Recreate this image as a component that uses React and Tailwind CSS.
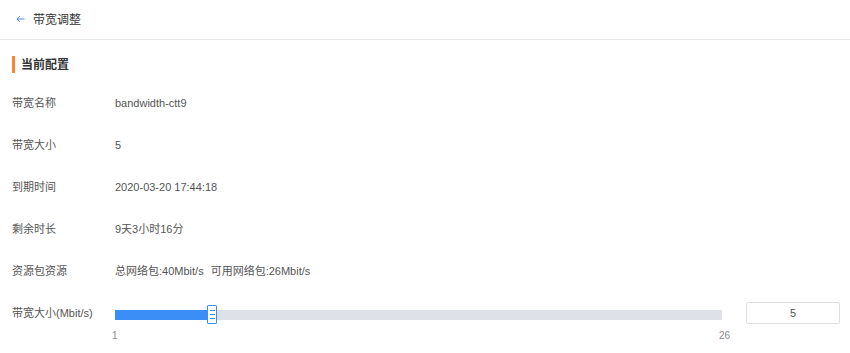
import React from "react";

function Row({ label, children }) {
  return (
    <div className="flex h-[42px] items-center">
      <div className="w-[103px] shrink-0 text-[11px] text-[#555]">{label}</div>
      <div className="text-[11px] text-[#555]">{children}</div>
    </div>
  );
}

export default function App() {
  return (
    <div className="w-[850px] h-[353px] bg-white font-['Liberation_Sans','Noto_Sans_CJK_SC',sans-serif]">
      <div className="flex h-[40px] items-center border-b border-[#e6e8eb] pl-[16px]">
        <svg width="9" height="8" viewBox="0 0 9 8" className="mr-[8px] mt-[-2px]">
          <path d="M4 1 L1 4 L4 7 M1 4 H8.5" fill="none" stroke="#4a8cf0" strokeWidth="1" />
        </svg>
        <span className="text-[12px] text-[#333]">带宽调整</span>
      </div>
      <div className="mt-[16px] flex h-[17px] items-center pl-[12px]">
        <div className="h-[17px] w-[3px] bg-[#f5883a]" />
        <span className="ml-[6px] text-[12px] font-bold text-[#333]">当前配置</span>
      </div>
      <div className="mt-[9px] pl-[12px] pr-[10px]">
        <Row label="带宽名称">bandwidth-ctt9</Row>
        <Row label="带宽大小">5</Row>
        <Row label="到期时间">2020-03-20 17:44:18</Row>
        <Row label="剩余时长">9天3小时16分</Row>
        <Row label="资源包资源">
          <span>总网络包:40Mbit/s</span>
          <span className="ml-[7px]">可用网络包:26Mbit/s</span>
        </Row>
        <div className="flex h-[42px] items-center">
          <div className="w-[103px] shrink-0 text-[11px] text-[#555]">带宽大小(Mbit/s)</div>
          <div className="relative mt-[4px] h-[10px] flex-1 bg-[#dfe1e8]">
            <div className="h-full w-[92px] bg-[#3a8ef6]" />
            <div className="absolute left-[92px] top-[-5px] flex h-[19px] w-[10px] flex-col items-center justify-center gap-[3px] rounded-[1px] border border-[#3a8ef6] bg-white">
              <span className="block h-px w-[5px] bg-[#3a8ef6]" />
              <span className="block h-px w-[5px] bg-[#3a8ef6]" />
              <span className="block h-px w-[5px] bg-[#3a8ef6]" />
            </div>
            <div className="absolute left-[-3px] right-[-8px] top-[20px] flex justify-between text-[10px] leading-[12px] text-[#888]">
              <span>1</span>
              <span>26</span>
            </div>
          </div>
          <div className="ml-[24px] flex h-[22px] w-[94px] items-center justify-center rounded-[2px] border border-[#dcdfe6] text-[11px] text-[#555]">
            5
          </div>
        </div>
      </div>
    </div>
  );
}
